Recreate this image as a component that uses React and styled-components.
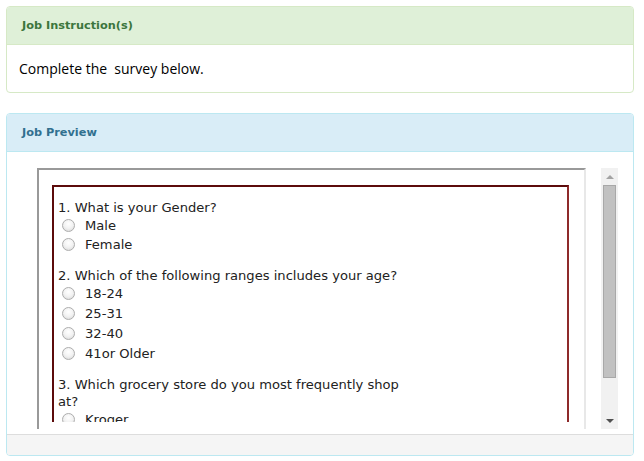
import React from 'react'
import styled, { createGlobalStyle } from 'styled-components'

const GlobalStyle = createGlobalStyle`
  html, body {
    margin: 0;
    padding: 0;
    background: #fff;
  }
  body {
    font-family: "DejaVu Sans", Verdana, sans-serif;
    color: #333;
  }
`

const Page = styled.div`
  padding: 6px 10px 0 6px;
  width: 628px;
`

const Panel = styled.div`
  border: 1px solid ${(p) => p.border};
  border-radius: 4px;
  margin-bottom: 20px;
  background: #fff;
  overflow: hidden;
`

const PanelHeading = styled.div`
  background: ${(p) => p.bg};
  color: ${(p) => p.color};
  border-bottom: 1px solid ${(p) => p.border};
  height: 37px;
  display: flex;
  align-items: center;
  padding-left: 15px;
  font-family: "DejaVu Sans", Verdana, sans-serif;
  font-weight: bold;
  font-size: 11.3px;
`

const PanelBody = styled.div`
  padding: 14px 12px 0;
  height: 33px;
  font-family: "Open Sans", Tahoma, sans-serif;
  font-size: 14px;
  color: #000;
`

const PreviewBody = styled.div`
  padding: 16px 15px 5px 30px;
  height: 261px;
`

const Frame = styled.div`
  display: flex;
  gap: 15px;
  height: 261px;
  overflow: hidden;
`

const Sheet = styled.div`
  flex: 1;
  display: flex;
  flex-direction: column;
  border-top: 2px solid #999;
  border-left: 2px solid #999;
  border-right: 2px solid #e8e8e8;
  padding-bottom: 7px;
`

const Viewport = styled.div`
  flex: 1;
  padding: 15px 15px 0 13px;
  overflow: hidden;
`

const Survey = styled.div`
  border: 2px solid #5c0b0b;
  border-right-color: #8e2a2a;
  border-bottom: none;
  padding: 12px 4px 0 4px;
  height: 300px;
  font-family: "DejaVu Sans", Verdana, sans-serif;
  font-size: 13.1px;
  color: #222;
`

const Question = styled.div`
  margin-bottom: 13px;
  line-height: 17px;
`

const QuestionTitle = styled.div`
  width: 352px;
`

const Option = styled.label`
  display: flex;
  align-items: center;
  height: ${(p) => (p.tall ? 20 : 19)}px;
  padding-left: 4px;
`

const Radio = styled.span`
  width: 11px;
  height: 11px;
  border-radius: 50%;
  border: 1px solid #adadad;
  background: radial-gradient(circle at 50% 35%, #fff 0%, #f2f2f2 50%, #d4d4d4 100%);
  margin-right: 10px;
  flex-shrink: 0;
`

const ScrollBar = styled.div`
  width: 17px;
  background: #f1f1f1;
  display: flex;
  flex-direction: column;
  align-items: center;
  flex-shrink: 0;
`

const ArrowBtn = styled.div`
  height: 17px;
  width: 17px;
  display: flex;
  align-items: center;
  justify-content: center;
`

const Arrow = styled.span`
  width: 0;
  height: 0;
  border-left: 4px solid transparent;
  border-right: 4px solid transparent;
  ${(p) =>
    p.down
      ? 'border-top: 4px solid #505050;'
      : 'border-bottom: 4px solid #a3a3a3;'}
`

const Thumb = styled.div`
  width: 13px;
  height: 193px;
  background: #c1c1c1;
  border: 1px solid #a8a8a8;
  box-sizing: border-box;
`

const Track = styled.div`
  flex: 1;
`

const PanelFooter = styled.div`
  background: #f5f5f5;
  border-top: 1px solid #ddd;
  height: 20px;
`

const questions = [
  { title: '1. What is your Gender?', options: ['Male', 'Female'] },
  {
    title: '2. Which of the following ranges includes your age?',
    options: ['18-24', '25-31', '32-40', '41or Older'],
    tall: true,
  },
  {
    title: '3. Which grocery store do you most frequently shop at?',
    options: ['Kroger', 'Walmart', 'Target'],
  },
]

const App = () => {
  return (
    <Page>
      <GlobalStyle />
      <Panel border="#d6e9c6">
        <PanelHeading bg="#dff0d8" color="#3c763d" border="#d6e9c6">
          Job Instruction(s)
        </PanelHeading>
        <PanelBody>Complete the&nbsp; survey below.</PanelBody>
      </Panel>

      <Panel border="#bce8f1">
        <PanelHeading bg="#d9edf7" color="#31708f" border="#bce8f1">
          Job Preview
        </PanelHeading>
        <PreviewBody>
          <Frame>
            <Sheet>
              <Viewport>
                <Survey>
                  {questions.map((q) => (
                    <Question key={q.title}>
                      <QuestionTitle>{q.title}</QuestionTitle>
                      {q.options.map((o, i) => (
                        <Option key={o} tall={q.tall && i > 0}>
                          <Radio />
                          {o}
                        </Option>
                      ))}
                    </Question>
                  ))}
                </Survey>
              </Viewport>
            </Sheet>
            <ScrollBar>
              <ArrowBtn>
                <Arrow />
              </ArrowBtn>
              <Thumb />
              <Track />
              <ArrowBtn>
                <Arrow down />
              </ArrowBtn>
            </ScrollBar>
          </Frame>
        </PreviewBody>
        <PanelFooter />
      </Panel>
    </Page>
  )
}

export default App
